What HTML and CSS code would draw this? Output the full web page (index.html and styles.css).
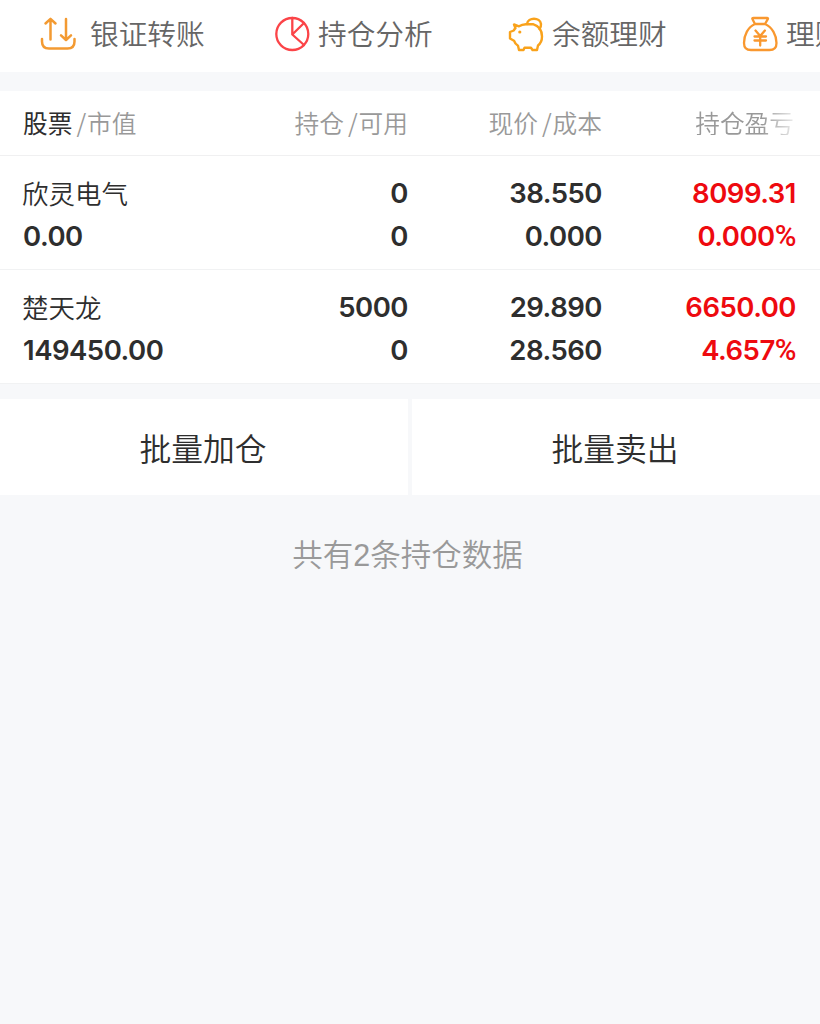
FILE: index.html
```html
<!DOCTYPE html>
<html lang="zh-CN">
<head>
<meta charset="utf-8">
<title>持仓</title>
<link rel="stylesheet" href="styles.css">
</head>
<body>
<nav class="shortcuts">
  <a class="shortcut shortcut-wide">
    <svg class="icon" viewBox="0 0 36 36" fill="none" stroke="#f39a32" stroke-width="2.5" stroke-linecap="round" stroke-linejoin="round"><path d="M10.500 23.500V3M5.500 7.500 10.500 2.800l5 4.700M26 3v20.500M21 19.300l5 4.700 5-4.700M2 23v2.500Q2 32.500 9 32.500H27.500Q34.500 32.500 34.500 25.500V23"/></svg>
    <span>银证转账</span>
  </a>
  <a class="shortcut">
    <svg class="icon" viewBox="0 0 36 36" fill="none" stroke="#fb4448" stroke-width="2.3" stroke-linecap="round" stroke-linejoin="round"><circle cx="18.300" cy="18" r="16"/><path d="M18.300 2v16.500L30 29M18.300 18.500 30 7"/></svg>
    <span>持仓分析</span>
  </a>
  <a class="shortcut">
    <svg class="icon" viewBox="0 0 36 36" fill="none" stroke="#f9a21b" stroke-width="2.4" stroke-linejoin="round" stroke-linecap="round"><path d="M6 8.500 11 10.300Q14 8.500 18 8.200H25Q34 11 34 20.500 34 26.500 30 29.500L29 34H24.500L23 31.800H16.500L15.500 34H11L10 29.800Q7 28 6 24.700L2 22.500V16L5.800 14.500Q6.500 13 7.500 12.300Z"/><path d="M19 8C20 1 32 1 33 8Q33.200 11 31.500 13"/><circle cx="11.800" cy="16" r="1.600" fill="#f9a21b" stroke="none"/></svg>
    <span>余额理财</span>
  </a>
  <a class="shortcut">
    <svg class="icon" viewBox="0 0 36 36" fill="none" stroke="#f9982f" stroke-width="2.3" stroke-linecap="round" stroke-linejoin="round"><path d="M13 8 10.500 3.200Q9.800 2 11.500 2H25Q26.500 2 25.800 3.200L23 8ZM13 8C6 11 2 19 2 27Q2 34 9 34H27.500Q34.500 34 34.500 27C34.500 19 30 11 23 8M13.500 14.500l4.700 5.500 4.700-5.500M12.500 20.500H24M12.500 24.500H24M18.200 20.500V29.500"/></svg>
    <span>理财</span>
  </a>
</nav>
<main>
  <section class="holdings">
    <div class="grid head">
      <div class="first"><b>股票</b><i>/</i>市值</div>
      <div>持仓<i>/</i>可用</div>
      <div>现价<i>/</i>成本</div>
      <div class="fade">持仓盈亏</div>
    </div>
    <div class="grid row">
      <div class="name">欣灵电气</div><div>0</div><div>38.550</div><div class="up">8099.31</div>
      <div class="first">0.00</div><div>0</div><div>0.000</div><div class="up">0.000<span class="pct">%</span></div>
    </div>
    <div class="grid row">
      <div class="name">楚天龙</div><div>5000</div><div>29.890</div><div class="up">6650.00</div>
      <div class="first">149450.00</div><div>0</div><div>28.560</div><div class="up">4.657<span class="pct">%</span></div>
    </div>
  </section>
  <section class="actions">
    <button class="action">批量加仓</button>
    <button class="action">批量卖出</button>
  </section>
  <p class="summary">共有<span class="count">2</span>条持仓数据</p>
</main>
</body>
</html>
```
FILE: styles.css
```css
* { box-sizing: border-box; }
body {
  margin: 0;
  min-height: 1024px;
  overflow-x: hidden;
  background: #f7f8fa;
  color: #2e2e2e;
  font-family: Inter, "Noto Sans CJK SC", sans-serif;
}
.shortcuts {
  display: flex;
  height: 72px;
  padding: 0 0 4px 40px;
  overflow: hidden;
  background: #fff;
}
.shortcut {
  display: flex;
  flex: 0 0 234px;
  align-items: center;
  gap: 8px;
  color: #666;
  font: 350 28.7px/1 "Noto Sans CJK SC", sans-serif;
  white-space: nowrap;
}
.shortcut span { padding-bottom: 1px; }
.shortcut-wide { gap: 14px; }
.icon { flex: none; width: 36px; height: 36px; }
.holdings { margin-top: 19px; }
.grid {
  display: grid;
  grid-template-columns: 1fr 194px 194px 194px;
  padding: 0 24px 0 23px;
  background: #fff;
  text-align: right;
}
.head {
  height: 65px;
  padding-bottom: 1px;
  align-items: center;
  border-bottom: 1px solid #f0f0f1;
  color: #999;
  font: 350 24.7px/1 "Noto Sans CJK SC", sans-serif;
}
.head b { color: #2e2e2e; font-weight: 400; }
.head i { margin: 0 1px 0 4px; font-style: normal; }
.first, .name { text-align: left; }
.fade {
  padding-right: 2px;
  -webkit-mask-image: linear-gradient(to right, #000 160px, transparent 200px);
  mask-image: linear-gradient(to right, #000 160px, transparent 200px);
}
.row {
  height: 114px;
  padding-top: 16px;
  grid-auto-rows: 43px;
  line-height: 43px;
  align-content: start;
  border-bottom: 1px solid #f1f2f3;
  font-size: 27.500px;
  font-weight: 600;
  letter-spacing: -0.5px;
}
.name {
  margin-left: -1px;
  font: 350 26.500px/41px "Noto Sans CJK SC", sans-serif;
  letter-spacing: 0;
}
.up { color: #ee0a0f; }
.pct { font-family: Roboto, sans-serif; font-size: 29.500px; font-weight: 500; line-height: 1; }
.actions {
  display: grid;
  grid-template-columns: 408px 408px;
  gap: 4px;
  height: 96px;
  margin-top: 15px;
}
.action {
  border: 0;
  padding: 2px 2px 0 0;
  background: #fff;
  color: #2e2e2e;
  font: 350 31.800px/1 "Noto Sans CJK SC", sans-serif;
}
.summary {
  margin: 37px 5px 0 0;
  color: #999;
  font: 350 30.500px/42px "Noto Sans CJK SC", sans-serif;
  text-align: center;
}
.count { font-family: "Liberation Sans", sans-serif; }
```
